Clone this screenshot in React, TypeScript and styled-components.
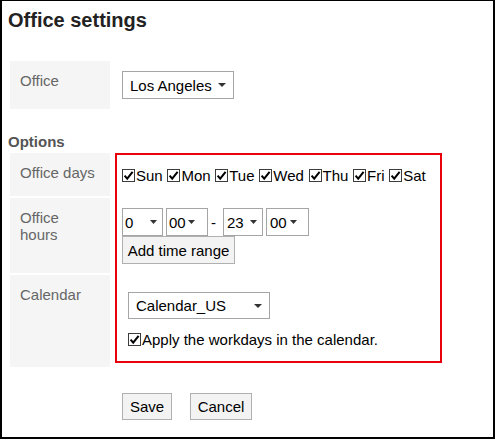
import React from "react";
import styled, { createGlobalStyle } from "styled-components";

const GlobalStyle = createGlobalStyle`
  html, body { margin: 0; padding: 0; background: #fff; }
  body { font-family: "Liberation Sans", Arial, sans-serif; }
  * { box-sizing: border-box; }
`;

const Page = styled.div`
  width: 495px;
  height: 439px;
  border-style: solid;
  border-color: #000;
  border-width: 1px 2px 2px 2px;
  padding: 8px 0 0 6px;
  color: #000;
  font-size: 15px;
  line-height: 17px;
`;

const Title = styled.h1`
  margin: 0;
  font-size: 20px;
  line-height: 23px;
  font-weight: bold;
  color: #222;
`;

const FormGrid = styled.div<{ $rows: string; $mt: number }>`
  display: grid;
  grid-template-columns: 100px 327px;
  grid-template-rows: ${(p) => p.$rows};
  column-gap: 5px;
  row-gap: 2px;
  margin: ${(p) => p.$mt}px 0 0 2px;
`;

const LabelCell = styled.div<{ $row?: number }>`
  grid-column: 1;
  grid-row: ${(p) => p.$row ?? 1};
  background: #f5f5f5;
  padding: 11px 10px;
  color: #666;
  font-size: 15px;
  line-height: 17px;
`;

const ValueCell = styled.div`
  grid-column: 2;
  padding: 10px 7px;
`;

const SectionHeading = styled.div`
  margin: 24px 0 3px 0;
  font-weight: bold;
  color: #555;
  font-size: 15px;
  line-height: 17px;
`;

const RedBox = styled.div`
  grid-column: 2;
  grid-row: 1 / 4;
  align-self: start;
  border: 2px solid #e8000b;
  display: flex;
  flex-direction: column;
`;

const Block = styled.div<{ $h: number; $pt: number; $pl: number }>`
  height: ${(p) => p.$h}px;
  padding: ${(p) => p.$pt}px 0 0 ${(p) => p.$pl}px;
  display: flex;
  flex-direction: column;
  align-items: flex-start;
`;

const DaysRow = styled.div`
  display: flex;
  align-items: center;
  gap: 4.7px;
  line-height: 17px;
`;

const CheckItem = styled.label<{ $mt?: number }>`
  display: inline-flex;
  align-items: center;
  gap: 1px;
  margin-top: ${(p) => p.$mt ?? 0}px;
  color: #000;
  font-size: 15px;
  line-height: 17px;
  white-space: nowrap;
`;

const BoxSvg = styled.svg`
  display: block;
  flex: none;
`;

const Select = styled.div<{ $w: number; $h: number; $pl: number; $pr: number }>`
  display: flex;
  align-items: center;
  justify-content: space-between;
  width: ${(p) => p.$w}px;
  height: ${(p) => p.$h}px;
  padding: 0 ${(p) => p.$pr}px 0 ${(p) => p.$pl}px;
  border: 1px solid #a5a5a5;
  background: #fff;
  color: #000;
  font-size: 15px;
  line-height: 17px;
  white-space: nowrap;
`;

const TimeRow = styled.div`
  display: flex;
  align-items: center;
  gap: 3px;
`;

const Dash = styled.span`
  width: 5px;
  margin-right: 4px;
  color: #000;
`;

const Button = styled.button<{ $w: number; $h: number }>`
  width: ${(p) => p.$w}px;
  height: ${(p) => p.$h}px;
  padding: 0;
  border: 1px solid #b0b0b0;
  border-radius: 0;
  background: #f3f3f3;
  color: #000;
  font-family: "Liberation Sans", Arial, sans-serif;
  font-size: 15px;
  line-height: 17px;
  text-align: center;
`;

const ButtonRow = styled.div`
  display: flex;
  gap: 18px;
  margin: 26px 0 0 114px;
`;

const Check = () => (
  <BoxSvg width="13" height="13" viewBox="0 0 13 13">
    <rect x="0.5" y="0.5" width="12" height="12" fill="#fff" stroke="#3c3c3c" />
    <path d="M2.6 6.6 L5.2 9.6 L10.6 2.8" fill="none" stroke="#000" strokeWidth="2" />
  </BoxSvg>
);

const Arrow = ({ w = 8 }: { w?: number }) => (
  <svg width={w} height="4" viewBox={`0 0 ${w} 4`} style={{ display: "block", flex: "none" }}>
    <path d={`M0 0 H${w} L${w / 2} 4 Z`} fill="#333" />
  </svg>
);

const days = ["Sun", "Mon", "Tue", "Wed", "Thu", "Fri", "Sat"];

export default function App() {
  return (
    <>
      <GlobalStyle />
      <Page>
        <Title>Office settings</Title>

        <FormGrid $rows="auto" $mt={29}>
          <LabelCell>Office</LabelCell>
          <ValueCell>
            <Select $w={112} $h={28} $pl={7} $pr={7}>
              <span>Los Angeles</span>
              <Arrow />
            </Select>
          </ValueCell>
        </FormGrid>

        <SectionHeading>Options</SectionHeading>

        <FormGrid $rows="43px 75px 92px" $mt={0}>
          <LabelCell $row={1}>Office days</LabelCell>
          <LabelCell $row={2}>Office hours</LabelCell>
          <LabelCell $row={3}>Calendar</LabelCell>
          <RedBox>
            <Block $h={43} $pt={12} $pl={5}>
              <DaysRow>
                {days.map((d) => (
                  <CheckItem key={d}>
                    <Check />
                    {d}
                  </CheckItem>
                ))}
              </DaysRow>
            </Block>
            <Block $h={78} $pt={10} $pl={5}>
              <TimeRow>
                <Select $w={41} $h={28} $pl={2} $pr={5}>
                  <span>0</span>
                  <Arrow w={7} />
                </Select>
                <Select $w={42} $h={28} $pl={2} $pr={12}>
                  <span>00</span>
                  <Arrow w={7} />
                </Select>
                <Dash>-</Dash>
                <Select $w={40} $h={28} $pl={3} $pr={5}>
                  <span>23</span>
                  <Arrow w={7} />
                </Select>
                <Select $w={43} $h={28} $pl={3} $pr={11}>
                  <span>00</span>
                  <Arrow w={7} />
                </Select>
              </TimeRow>
              <Button $w={113} $h={28}>Add time range</Button>
            </Block>
            <Block $h={85} $pt={16} $pl={11}>
              <Select $w={142} $h={27} $pl={7} $pr={7}>
                <span>Calendar_US</span>
                <Arrow />
              </Select>
              <CheckItem $mt={12}>
                <Check />
                Apply the workdays in the calendar.
              </CheckItem>
            </Block>
          </RedBox>
        </FormGrid>

        <ButtonRow>
          <Button $w={50} $h={27}>Save</Button>
          <Button $w={62} $h={27}>Cancel</Button>
        </ButtonRow>
      </Page>
    </>
  );
}
